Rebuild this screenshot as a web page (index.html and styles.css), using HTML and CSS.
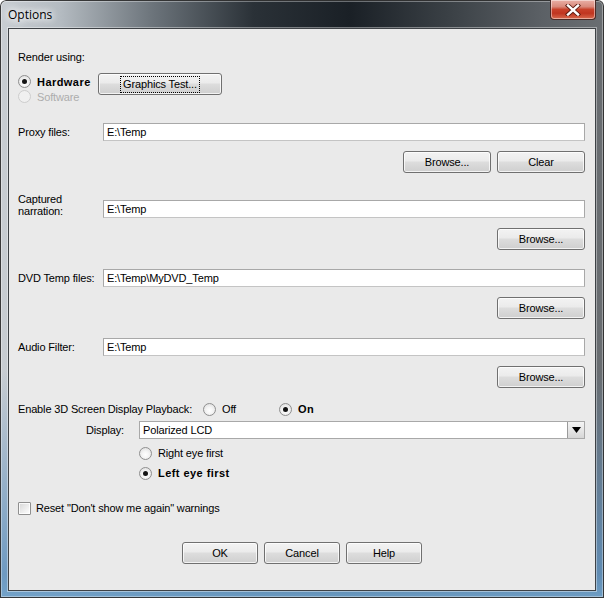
FILE: index.html
```html
<!DOCTYPE html>
<html>
<head>
<meta charset="utf-8">
<link rel="stylesheet" href="styles.css">
</head>
<body>
<div class="window">
  <div class="titlebar">
    <span class="title">Options</span>
    <div class="close">
      <svg width="18" height="12" viewBox="0 0 18 12">
        <path d="M4 1.5 L14 10.5 M14 1.5 L4 10.5" stroke="#5a1a10" stroke-width="4.2" stroke-linecap="square" fill="none"/>
        <path d="M4 1.5 L14 10.5 M14 1.5 L4 10.5" stroke="#ffffff" stroke-width="2.4" stroke-linecap="square" fill="none"/>
      </svg>
    </div>
  </div>
  <div class="client">
    <div class="text-line r-render">Render using:</div>

    <div class="row r-hw">
      <div class="radio-col">
        <div class="opt"><span class="radio on"></span><b>Hardware</b></div>
        <div class="opt disabled"><span class="radio dis"></span>Software</div>
      </div>
      <button class="btn w124"><span class="focus">Graphics Test...</span></button>
    </div>

    <div class="row field r-proxy">
      <div class="label">Proxy files:</div>
      <div class="input">E:\Temp</div>
    </div>
    <div class="btnrow r-b1">
      <button class="btn w88">Browse...</button>
      <button class="btn w88">Clear</button>
    </div>

    <div class="row field cap r-cap">
      <div class="label two">Captured<br>narration:</div>
      <div class="input">E:\Temp</div>
    </div>
    <div class="btnrow r-b2">
      <button class="btn w88">Browse...</button>
    </div>

    <div class="row field r-dvd">
      <div class="label">DVD Temp files:</div>
      <div class="input">E:\Temp\MyDVD_Temp</div>
    </div>
    <div class="btnrow r-b3">
      <button class="btn w88">Browse...</button>
    </div>

    <div class="row field r-audio">
      <div class="label">Audio Filter:</div>
      <div class="input">E:\Temp</div>
    </div>
    <div class="btnrow r-b4">
      <button class="btn w88">Browse...</button>
    </div>

    <div class="row r-3d">
      <div class="label3d">Enable 3D Screen Display Playback:</div>
      <div class="opt w76"><span class="radio"></span>Off</div>
      <div class="opt"><span class="radio on"></span><b>On</b></div>
    </div>

    <div class="row r-display">
      <div class="dlabel">Display:</div>
      <div class="select">
        <span class="seltext">Polarized LCD</span>
        <span class="arrow"><svg width="9" height="6" viewBox="0 0 9 6"><path d="M0 0 H9 L4.5 6 Z" fill="#000"/></svg></span>
      </div>
    </div>

    <div class="row indent r-right">
      <div class="opt"><span class="radio"></span>Right eye first</div>
    </div>
    <div class="row indent r-left">
      <div class="opt"><span class="radio on"></span><b>Left eye first</b></div>
    </div>

    <div class="row r-check">
      <div class="opt"><span class="check"></span>Reset "Don't show me again" warnings</div>
    </div>

    <div class="footer">
      <button class="btn w76">OK</button>
      <button class="btn w76">Cancel</button>
      <button class="btn w76">Help</button>
    </div>
  </div>
</div>
</body>
</html>
```

FILE: styles.css
```css
html, body {
  margin: 0;
  padding: 0;
}
body {
  width: 604px;
  height: 598px;
  overflow: hidden;
  background: #ffffff;
  font-family: "Liberation Sans", Arial, sans-serif;
  font-size: 11px;
  letter-spacing: -0.15px;
  color: #000;
}
.window {
  width: 604px;
  height: 598px;
  box-sizing: border-box;
  padding: 0 8px 7px 8px;
  border-radius: 6px 6px 0 0;
  background:
    linear-gradient(to bottom, rgba(0,0,0,0) 0%, rgba(0,0,0,0) 62%, rgba(95,145,190,0.85) 96%, rgba(110,160,200,0.95) 100%),
    linear-gradient(to right, #c9ced3 0%, #b4bbc1 10%, #6d757c 25%, #2a3137 42%, #1a2026 58%, #3c4247 75%, #5c6166 90%, #6a6e72 100%);
  box-shadow: inset 0 0 0 1px rgba(40,40,40,0.9), inset 0 0 0 2px rgba(255,255,255,0.35);
}
.titlebar {
  height: 28px;
  display: flex;
  align-items: flex-start;
  justify-content: space-between;
}
.title {
  font-family: "Open Sans", "Noto Sans", sans-serif;
  font-size: 12px;
  letter-spacing: 0;
  line-height: 14px;
  margin-top: 8px;
  color: #000;
  text-shadow: 0 0 6px #fff, 0 0 8px #fff, 0 0 10px rgba(255,255,255,0.9);
}
.close {
  width: 46px;
  height: 20px;
  margin-top: 0;
  margin-right: 0;
  box-sizing: border-box;
  border: 1px solid #4a2a26;
  border-top: none;
  border-radius: 0 0 4px 4px;
  background: linear-gradient(to bottom, #eab0a6 0%, #d98a7c 35%, #c8412a 50%, #c03520 70%, #d86a4e 100%);
  box-shadow: inset 0 0 0 1px rgba(255,255,255,0.45);
  display: flex;
  align-items: center;
  justify-content: center;
}
.client {
  width: 588px;
  height: 563px;
  box-sizing: border-box;
  border: 1px solid #3e4246;
  background: #eaeaea;
  padding: 0 10px 0 9px;
  display: flex;
  flex-direction: column;
  box-shadow: 0 0 0 1px rgba(255,255,255,0.4);
}
.text-line {
  line-height: 14px;
  height: 14px;
}
.row {
  display: flex;
  align-items: center;
}
.r-render { margin-top: 21px; }
.r-hw { margin-top: 9px; align-items: flex-start; height: 31px; }
.radio-col {
  width: 80px;
  padding-top: 1px;
  display: flex;
  flex-direction: column;
}
.radio-col .opt { height: 15px; }
.opt {
  display: flex;
  align-items: center;
  white-space: nowrap;
  line-height: 14px;
}
.opt b { font-weight: bold; letter-spacing: 0.45px; }
.opt.disabled { color: #adadad; }
.radio {
  width: 13px;
  height: 13px;
  box-sizing: border-box;
  border-radius: 50%;
  border: 1px solid #8f8f8f;
  background: radial-gradient(circle at 50% 60%, #ffffff 0%, #f4f4f4 40%, #d8d8d8 100%);
  position: relative;
  margin-right: 6px;
  flex: none;
}
.radio.on::after {
  content: "";
  position: absolute;
  left: 3px;
  top: 3px;
  width: 5px;
  height: 5px;
  border-radius: 50%;
  background: #141414;
}
.radio.dis {
  border-color: #cdcdcd;
  background: #f0f0f0;
}
.check {
  width: 13px;
  height: 13px;
  box-sizing: border-box;
  border: 1px solid #8f8f8f;
  border-radius: 1px;
  background: linear-gradient(135deg, #d6d6d6 0%, #efefef 60%, #ffffff 100%);
  box-shadow: inset 0 0 0 1px rgba(255,255,255,0.8);
  margin-right: 5px;
  flex: none;
}
.btn {
  height: 22px;
  box-sizing: border-box;
  border: 1px solid #707070;
  border-radius: 3px;
  background: linear-gradient(to bottom, #f3f3f3 0%, #ebebeb 45%, #dddddd 50%, #cfcfcf 100%);
  box-shadow: inset 0 0 0 1px rgba(255,255,255,0.75);
  font-family: "Liberation Sans", Arial, sans-serif;
  font-size: 11px;
  letter-spacing: -0.15px;
  color: #000;
  padding: 0;
  margin: 0;
  display: flex;
  align-items: center;
  justify-content: center;
}
.w124 { width: 124px; }
.w88 { width: 88px; }
.w76 { width: 76px; }
.focus {
  outline: 1px dotted #000;
  outline-offset: 1px;
  padding: 0 1px;
  line-height: 13px;
}
.field .label {
  width: 85px;
  flex: none;
  line-height: 14px;
}
.input {
  flex: 1;
  height: 18px;
  box-sizing: border-box;
  border: 1px solid #a8a8a8;
  border-bottom-color: #c4c4c4;
  background: #fff;
  padding: 0 3px;
  line-height: 16px;
  white-space: nowrap;
}
.r-proxy { margin-top: 19px; }
.btnrow {
  display: flex;
  justify-content: flex-end;
  gap: 6px;
}
.r-b1 { margin-top: 10px; }
.cap { align-items: flex-start; height: 25px; }
.cap .label { line-height: 12px; }
.cap .input { margin-top: 7px; }
.r-cap { margin-top: 20px; }
.r-b2 { margin-top: 10px; }
.r-dvd { margin-top: 19px; }
.r-b3 { margin-top: 10px; }
.r-audio { margin-top: 19px; }
.r-b4 { margin-top: 10px; }
.r-3d { margin-top: 14px; height: 14px; }
.label3d { width: 185px; flex: none; }
.opt.w76 { width: 76px; }
.r-display { margin-top: 5px; }
.dlabel {
  margin-left: 68px;
  width: 53px;
  flex: none;
}
.select {
  flex: 1;
  height: 18px;
  box-sizing: border-box;
  border: 1px solid #a8a8a8;
  background: #fff;
  display: flex;
  align-items: center;
  justify-content: space-between;
  padding-left: 3px;
}
.seltext { line-height: 16px; }
.arrow {
  width: 17px;
  height: 16px;
  box-sizing: border-box;
  border-left: 1px solid #9a9a9a;
  background: linear-gradient(to bottom, #f4f4f4 0%, #e6e6e6 50%, #d6d6d6 100%);
  display: flex;
  align-items: center;
  justify-content: center;
}
.indent { padding-left: 121px; height: 14px; }
.r-right { margin-top: 7px; }
.r-left { margin-top: 6px; }
.r-check { margin-top: 21px; height: 14px; }
.footer {
  margin-top: 27px;
  display: flex;
  justify-content: center;
  gap: 6px;
  padding-left: 1px;
}
```
